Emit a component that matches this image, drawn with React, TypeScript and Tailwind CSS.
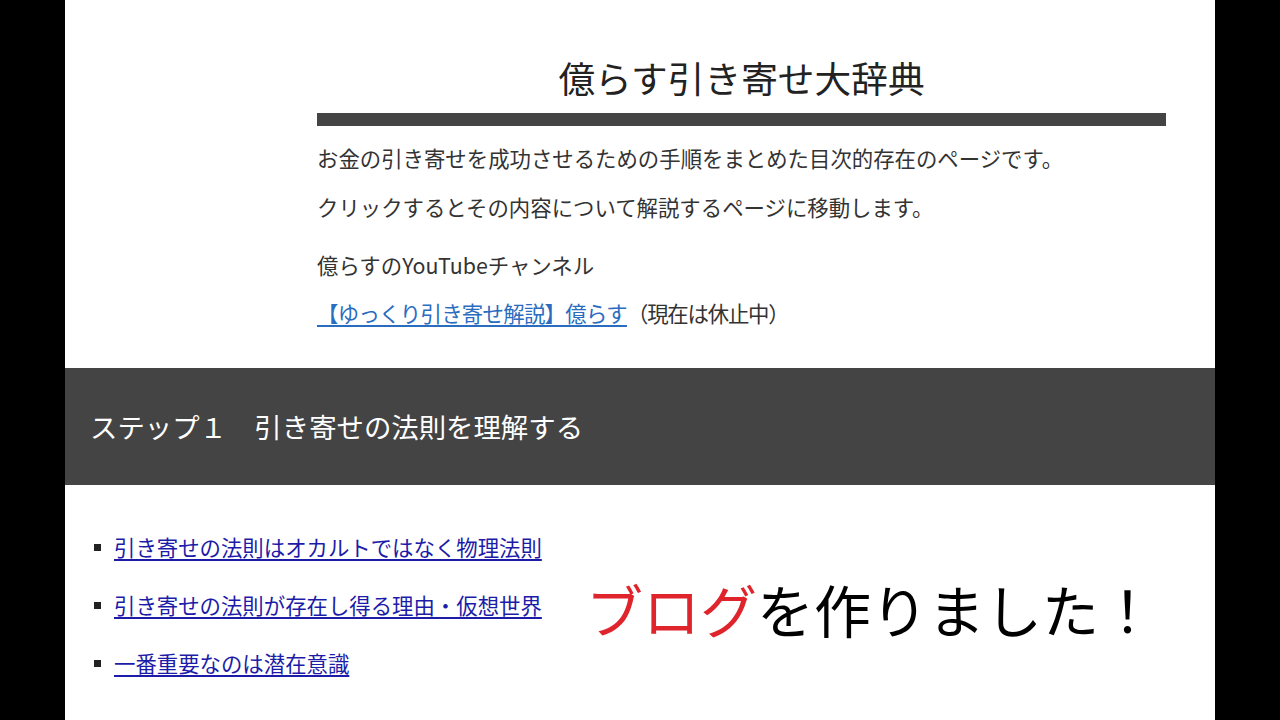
const jp = { fontFamily: '"Noto Sans CJK JP", "Noto Sans", sans-serif' };

const steps = [
  "引き寄せの法則はオカルトではなく物理法則",
  "引き寄せの法則が存在し得る理由・仮想世界",
  "一番重要なのは潜在意識",
];

export default function App() {
  return (
    <div className="w-[1280px] h-[720px] bg-black flex overflow-hidden" style={jp}>
      <div className="w-[65px] shrink-0" />
      <main className="relative w-[1150px] h-full bg-white overflow-hidden">
        {/* header */}
        <div className="pl-[252px] pt-[50px] w-[1101px]">
          <h1 className="text-[36.7px] leading-[55px] text-[#222] text-center font-normal">
            億らす引き寄せ大辞典
          </h1>
          <div className="mt-[8px] h-[13px] bg-[#444]" />
          <p className="mt-[16px] text-[21.4px] leading-[32px] text-[#333]">
            お金の引き寄せを成功させるための手順をまとめた目次的存在のページです。
          </p>
          <p className="mt-[17px] text-[21.4px] leading-[32px] text-[#333]">
            クリックするとその内容について解説するページに移動します。
          </p>
          <p className="mt-[26px] text-[21.4px] leading-[32px] text-[#333]">
            億らすのYouTubeチャンネル
          </p>
          <p className="mt-[16px] text-[21.4px] leading-[32px] text-[#333] tracking-[-0.7px]">
            <a className="text-[#2a6cc0] underline underline-offset-[3px]" href="#">
              【ゆっくり引き寄せ解説】億らす
            </a>
            <span className="tracking-[-1.2px]">（現在は休止中）</span>
          </p>
        </div>

        {/* step band */}
        <div className="mt-[39px] h-[117px] bg-[#444] flex items-center pl-[25px]">
          <h2 className="text-[27.4px] text-white font-normal">
            ステップ１　引き寄せの法則を理解する
          </h2>
        </div>

        {/* list */}
        <ul className="mt-[46px] pl-[29px] flex flex-col gap-[26px]">
          {steps.map((s) => (
            <li key={s} className="flex items-center h-[32px]">
              <span className="w-[7px] h-[7px] bg-[#222] mr-[13px]" />
              <a
                href="#"
                className="text-[21.4px] leading-[32px] text-[#1c1ca8] underline underline-offset-[3px]"
              >
                {s}
              </a>
            </li>
          ))}
        </ul>

        {/* overlay caption */}
        <div className="absolute left-[521px] top-[568px] text-[57px] leading-[80px] text-black whitespace-nowrap">
          <span className="text-[#e0242b]">ブログ</span>を作りました！
        </div>
      </main>
      <div className="w-[65px] shrink-0" />
    </div>
  );
}
